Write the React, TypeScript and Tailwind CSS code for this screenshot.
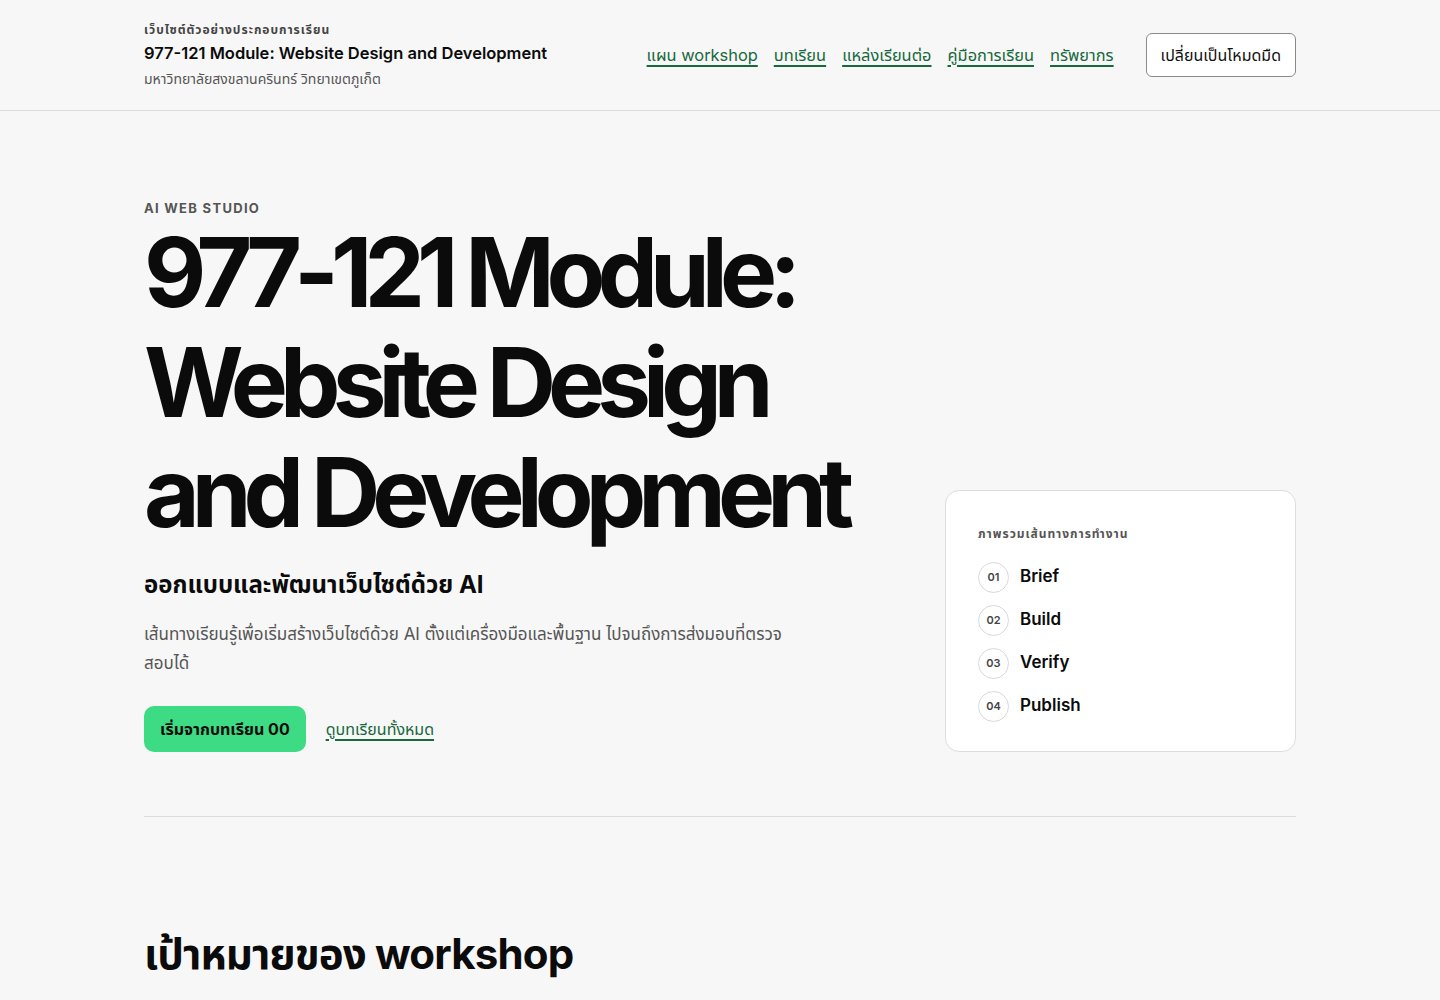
const navLinks = ["แผน workshop", "บทเรียน", "แหล่งเรียนต่อ", "คู่มือการเรียน", "ทรัพยากร"];

const steps = [
    { no: "01", label: "Brief" },
    { no: "02", label: "Build" },
    { no: "03", label: "Verify" },
    { no: "04", label: "Publish" },
];

const linkClass =
    "text-[#17683c] underline decoration-2 underline-offset-[4px] decoration-[#17683c]";

const Header = () => (
    <header className="border-b border-[#dcdcdc]">
        <div className="mx-auto flex h-[110px] w-[1152px] items-center justify-between">
            <div className="flex flex-col">
                <span className="text-[12px] font-bold tracking-[0.08em] text-[#444]">เว็บไซต์ตัวอย่างประกอบการเรียน</span>
                <span className="mt-[2px] text-[16.5px] font-semibold text-[#0b0b0b]">
                    977-121 Module: Website Design and Development
                </span>
                <span className="mt-[2px] text-[14px] text-[#555]">มหาวิทยาลัยสงขลานครินทร์ วิทยาเขตภูเก็ต</span>
            </div>
            <div className="flex items-center gap-8">
                <nav className="flex items-center gap-4 text-[16.4px]">
                    {navLinks.map((l) => (
                        <a key={l} href="#" className={linkClass}>
                            {l}
                        </a>
                    ))}
                </nav>
                <button className="h-11 rounded-md border border-[#8a8a8a] bg-white px-[14px] text-[16px] text-[#111]">
                    เปลี่ยนเป็นโหมดมืด
                </button>
            </div>
        </div>
    </header>
);

const RouteCard = () => (
    <aside className="rounded-[14px] border border-[#dddddd] bg-white px-8 pt-[29px] pb-[29px]">
        <span className="text-[12px] font-bold tracking-[0.08em] text-[#555]">ภาพรวมเส้นทางการทำงาน</span>
        <ol className="mt-[18px] flex flex-col gap-3">
            {steps.map((s) => (
                <li key={s.no} className="flex items-center gap-[11px]">
                    <span className="flex h-[31px] w-[31px] items-center justify-center rounded-full border border-[#d9d9d9] text-[11px] font-semibold text-[#444]">
                        {s.no}
                    </span>
                    <span className="text-[17px] font-semibold text-[#0b0b0b]">{s.label}</span>
                </li>
            ))}
        </ol>
    </aside>
);

export default function App() {
    return (
        <div
            className="min-h-screen bg-[#f7f7f7] text-[#0b0b0b]"
            style={{ fontFamily: 'Inter, "Noto Sans", "Noto Sans Thai", sans-serif' }}
        >
            <Header />
            <main className="mx-auto w-[1152px]">
                <section className="grid grid-cols-[1fr_351px] items-end gap-12 border-b border-[#dcdcdc] pt-[88px] pb-16">
                    <div>
                        <p className="text-[13px] font-bold tracking-[0.1em] text-[#555]">AI WEB STUDIO</p>
                        <h1 className="-mt-[2px] text-[96px] font-bold leading-[110px] tracking-[-0.083em]">
                            977-121 Module:
                            <br />
                            Website Design
                            <br />
                            and Development
                        </h1>
                        <h2 className="mt-[22px] text-[24px] font-bold leading-8">ออกแบบและพัฒนาเว็บไซต์ด้วย AI</h2>
                        <p className="mt-[19px] max-w-[640px] text-[17px] leading-[29px] text-[#555]">
                            เส้นทางเรียนรู้เพื่อเริ่มสร้างเว็บไซต์ด้วย AI ตั้งแต่เครื่องมือและพื้นฐาน ไปจนถึงการส่งมอบที่ตรวจสอบได้
                        </p>
                        <div className="mt-[28px] flex items-center gap-5">
                            <a
                                href="#"
                                className="flex h-[46px] items-center rounded-[10px] bg-[#3ddc84] px-4 text-[16px] font-bold text-[#0b0b0b]"
                            >
                                เริ่มจากบทเรียน 00
                            </a>
                            <a href="#" className={`${linkClass} text-[16px]`}>
                                ดูบทเรียนทั้งหมด
                            </a>
                        </div>
                    </div>
                    <RouteCard />
                </section>
                <section className="pt-[105px]">
                    <h2 className="text-[42px] font-bold tracking-[-0.02em]">เป้าหมายของ workshop</h2>
                </section>
            </main>
        </div>
    );
}
